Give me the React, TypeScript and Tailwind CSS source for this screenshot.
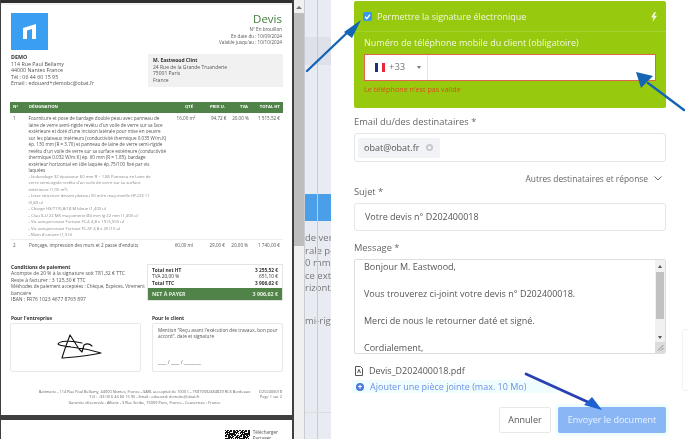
import React from "react";

const qr: React.ReactElement[] = [];
for (let y = 0; y < 14; y++) {
  for (let x = 0; x < 25; x++) {
    if (((x * 7 + y * 13 + ((x * y) % 5)) % 3) !== 1) {
      qr.push(<rect key={x + "-" + y} x={x} y={y} width="1" height="1" fill="#111" />);
    }
  }
}

const desc = [
  "Fourniture et pose de bardage double peau avec panneau de",
  "laine de verre semi-rigide revêtu d'un voile de verre sur sa face",
  "extérieure et doté d'une incision latérale pour mise en oeuvre",
  "sur les plateaux intérieurs (conductivité thermique 0.035 W/m.K)",
  "ép. 130 mm (R = 3.70) et panneau de laine de verre semi-rigide",
  "revêtu d'un voile de verre sur sa surface extérieure (conductivité",
  "thermique 0.032 W/m.K) ép. 60 mm (R = 1.85), bardage",
  "extérieur horizontal en tôle laquée ép.75/100 fixé par vis",
  "laquées",
];
const desc2 = [
  "- Isobardage 32 épaisseur 60 mm R = 1.85 Panneau en laine de",
  "verre semi-rigide revêtu d'un voile de verre sur sa surface",
  "extérieure (1,05 m²).",
  "- Lisse structure devant plateau 50 m/m maçonnelle HF-CI3 11",
  "(0,83 u)",
  "- Charge HS/77/6,8/18 M bleue (1,403 u)",
  "- Clou X-U 22 MX maçonnerie Ø4 mm lg 22 mm (1,403 u)",
  "- Vis autoperceuse Fortuse FC-6 4,8 x 19 (5,555 u)",
  "- Vis autoperceuse Fortuse FC-5F 4,8 x 20 (10 u)",
  "- Main d'oeuvre (1,3 h)",
];

function Label({ children }: { children: React.ReactNode }) {
  return <div className="text-[9.3px] leading-[14px] text-[#666]">{children}</div>;
}

function Page() {
  return (
    <div className="w-[291px] h-[410px] bg-white shrink-0 px-[9px] pt-[4px] text-[4.6px] leading-[6.5px] text-[#555] flex flex-col">
      <div className="flex justify-between items-start">
        <div className="w-[37px] h-[37px] mt-[4px] ml-px bg-[#3a9ff0] flex items-center justify-center">
          <svg width="13" height="15" viewBox="0 0 13 15">
            <path d="M0 4 L13 0 V15 H9 V5 L4 6.5 V15 H0 Z" fill="#fff" />
          </svg>
        </div>
        <div className="text-right pr-[1px]">
          <div className="text-[11.5px] leading-[15px] mt-[2px] text-[#3f7d3a]">Devis</div>
          <div>N° En brouillon</div>
          <div>En date du : 10/09/2024</div>
          <div>Valable jusqu'au : 10/10/2024</div>
        </div>
      </div>
      <div className="flex justify-between mt-[4px]">
        <div className="ml-px text-[5.3px]">
          <div className="font-bold text-[#333]">DEMO</div>
          <div>114 Rue Paul Bellamy</div>
          <div>44000 Nantes France</div>
          <div>Tél : 06 44 60 15 95</div>
          <div>Email : edouard+demobc@obat.fr</div>
        </div>
        <div className="w-[135px] h-[33px] bg-[#f1f1f1] px-[5px] pt-[3px] text-[5px]">
          <div className="font-bold text-[#333]">M. Eastwood Clint</div>
          <div>24 Rue de la Grande Truanderie</div>
          <div>75001 Paris</div>
          <div>France</div>
        </div>
      </div>
      <div className="mt-[15px] h-[11px] bg-[#4f8347] text-white font-bold text-[4.2px] flex items-center px-[3px]">
        <div className="w-[16px]">N°</div>
        <div className="flex-1">DÉSIGNATION</div>
        <div className="w-[30px] text-right">QTÉ</div>
        <div className="w-[32px] text-right">PRIX U.</div>
        <div className="w-[23px] text-right">TVA</div>
        <div className="w-[32px] text-right">TOTAL HT</div>
      </div>
      <div className="flex px-[3px] pt-[2px] border-b border-[#eee] h-[127px] overflow-hidden">
        <div className="w-[16px]">1</div>
        <div className="flex-1 whitespace-nowrap">
          {desc.map((l) => <div key={l}>{l}</div>)}
          <div className="text-[#888] text-[4.2px]">
            {desc2.map((l) => <div key={l}>{l}</div>)}
          </div>
        </div>
        <div className="w-[30px] text-right">16,00 m²</div>
        <div className="w-[32px] text-right">94,72 €</div>
        <div className="w-[23px] text-right">20,00 %</div>
        <div className="w-[32px] text-right">1 515,52 €</div>
      </div>
      <div className="flex px-[3px] pt-[2px]">
        <div className="w-[16px]">2</div>
        <div className="flex-1">Ponçage, impression des murs et 2 passe d'enduits</div>
        <div className="w-[30px] text-right">60,00 ml</div>
        <div className="w-[32px] text-right">29,00 €</div>
        <div className="w-[23px] text-right">20,00 %</div>
        <div className="w-[32px] text-right">1 740,00 €</div>
      </div>
      <div className="flex justify-between mt-[15px]">
        <div className="w-[130px] ml-px text-[5px]">
          <div className="font-bold text-[#333]">Conditions de paiement</div>
          <div>Acompte de 20 % à la signature soit 781,32 € TTC</div>
          <div>Reste à facturer : 3 125,30 € TTC</div>
          <div className="text-[4.6px] whitespace-nowrap">Méthodes de paiement acceptées : Chèque, Espèces, Virement</div>
          <div>bancaire</div>
          <div>IBAN : FR76 1023 4677 8765 897</div>
        </div>
        <div className="w-[136px] h-[37px] mt-[0.5px] border border-[#e4e4e4] flex flex-col text-[4.8px]">
          <div className="flex-1 px-[4px] pt-[2px] text-[#333] leading-[6.3px]">
            <div className="flex justify-between font-bold"><span>Total net HT</span><span>3 255,52 €</span></div>
            <div className="flex justify-between"><span>TVA 20,00 %</span><span>651,10 €</span></div>
            <div className="flex justify-between font-bold"><span>Total TTC</span><span>3 906,62 €</span></div>
          </div>
          <div className="h-[12px] bg-[#4f8347] text-[#e6f2e2] font-bold text-[5.3px] flex items-center justify-between px-[4px]">
            <span>NET À PAYER</span><span>3 906,62 €</span>
          </div>
        </div>
      </div>
      <div className="flex justify-between mt-[12px] text-[4.9px]">
        <div className="w-[131px]">
          <div className="font-bold text-[#333] h-[7px] ml-px">Pour l'entreprise</div>
          <div className="mt-[1px] h-[49px] rounded-[2px] border border-[#e8e8e8] flex items-center justify-center pl-[9px]">
            <svg width="50" height="28" viewBox="56 334 50 28" fill="none" stroke="#111" strokeWidth="1.1" strokeLinejoin="round" strokeLinecap="round">
              <path d="M71 336 C68 344 65 352 63 359 C75 358 90 357 102 354 C92 351 82 349 72 348 C66 347 60 347 59 345 C60 342 72 341 83 344 M71 336 L80 350 L83 353 L85 346 C88 344 91 345 93 347" />
            </svg>
          </div>
        </div>
        <div className="w-[131px]">
          <div className="font-bold text-[#333] h-[7px]">Pour le client</div>
          <div className="mt-[1px] h-[49px] rounded-[2px] border border-[#e8e8e8] px-[5px] pt-[3px] flex flex-col justify-between pb-[5px]">
            <div className="text-[4.7px] whitespace-nowrap">
              <div>Mention "Reçu avant l'exécution des travaux, bon pour</div>
              <div>accord", date et signature</div>
            </div>
            <div>____ / ____ / ________</div>
          </div>
        </div>
      </div>
      <div className="flex mt-[17px] text-[3.9px] leading-[5.5px] text-[#666]">
        <div className="flex-1 text-center pl-[26px]">
          <div>Batimarie - 114 Rue Paul Bellamy, 44000 Nantes, France - SARL au capital de 1000 € - 75879392484829 RCS Bordeaux</div>
          <div>Tél : +33 (0) 6 44 60 15 95 - Email : edouard+demobc@obat.fr</div>
          <div>Garantie décennale : Allianz - 3 Rue Scribe, 75009 Paris, France - Couverture : France</div>
        </div>
        <div className="w-[30px] text-right pr-px">
          <div>D202400018</div>
          <div>Page 1 sur 2</div>
        </div>
      </div>
    </div>
  );
}

function Viewer() {
  return (
    <div className="w-[294px] h-full shrink-0 bg-[#3f3f3f] pl-px overflow-hidden flex flex-col blur-[0.35px]">
      <div className="w-[291px] h-[5px] shrink-0 flex flex-col">
        <div className="h-[3px] bg-[#2f2f2f]" />
        <div className="h-[2px] bg-[#f2f2f2]" />
      </div>
      <Page />
      <div className="h-[5px] shrink-0" />
      <div className="w-[291px] flex-1 bg-white flex justify-end pr-[14px] pt-[10px] gap-[3px] text-[4.6px] leading-[5.5px] text-[#555]">
        <svg width="25" height="14" viewBox="0 0 25 14">{qr}</svg>
        <div>
          <div>Télécharger</div>
          <div>Partager</div>
        </div>
      </div>
    </div>
  );
}

function Scrollbar() {
  return (
    <div className="w-[10px] h-full shrink-0 bg-[#f0f0f0] flex flex-col">
      <div className="h-[13px] pt-[3px] bg-[#f1f1f1] flex justify-center">
        <div className="mt-[3px] w-0 h-0 border-x-[3px] border-x-transparent border-b-[3px] border-b-[#777]" />
      </div>
      <div className="h-[233px] bg-[#bdbdbd]" />
    </div>
  );
}

function Strip() {
  const lines = ["de verre", "rale pour", "0 mm (R", "ce extérie", "rizontal e"];
  return (
    <div className="w-[27px] h-full shrink-0 bg-[#e9ebf2] border-l border-[#c9cbd2] flex flex-col overflow-hidden text-[9.5px] text-[#777] whitespace-nowrap relative">
      <div className="absolute left-[12px] top-0 bottom-0 w-px bg-[#c9cbd2]" />
      <div className="h-[37px] shrink-0" />
      <div className="h-[28px] shrink-0 bg-[#dfe1ea]" />
      <div className="h-[129px] shrink-0" />
      <div className="h-[27px] shrink-0 bg-[#4a9fe8]" />
      <div className="pt-[11px] leading-[12.5px]">
        {lines.map((l) => <div key={l}>{l}</div>)}
        <div className="mt-[20px]">mi-rigide</div>
      </div>
      <div className="absolute left-0 right-0 top-[412px] h-px bg-[#dcdde3]" />
    </div>
  );
}

function Form() {
  return (
    <div className="flex-1 h-full bg-white pl-[23px] relative overflow-hidden">
      <div className="w-[312px] flex flex-col">
        <div className="mt-px h-[107px] bg-[#97c90f] rounded-[2px] flex flex-col">
          <div className="h-[31px] shrink-0 border-b border-[#a3d12e] flex items-center justify-between pl-[9px] pr-[9px] pt-px">
            <div className="flex items-center gap-[5px]">
              <div className="w-[9px] h-[9px] rounded-[2px] bg-[#3a97e8] flex items-center justify-center">
                <svg width="7" height="7" viewBox="0 0 10 10" fill="none" stroke="#fff" strokeWidth="2">
                  <path d="M1.5 5.5 L4 8 L8.5 2.5" />
                </svg>
              </div>
              <span className="text-[9px] leading-[14px] text-[#f2f8dc]">Permettre la signature électronique</span>
            </div>
            <svg width="6" height="10" viewBox="0 0 6 10"><path d="M3.5 0 L0 5.5 H2.5 L1.5 10 L6 3.8 H3.3 L5 0 Z" fill="#f2f8dc" /></svg>
          </div>
          <div className="px-[10px] pt-[4px]">
            <div className="text-[9px] leading-[14px] text-[#f2f8dc]">Numéro de téléphone mobile du client (obligatoire)</div>
            <div className="mt-[4px] h-[27px] bg-white border border-[#e0654a] flex items-center">
              <div className="w-[63px] h-full border-r border-[#e3e3e3] flex items-center pl-[10px] gap-[4px]">
                <div className="w-[10px] h-[9px] flex">
                  <div className="flex-1 bg-[#1d2f7d]" />
                  <div className="flex-1 bg-white" />
                  <div className="flex-1 bg-[#e8283a]" />
                </div>
                <span className="text-[9.5px] text-[#777]">+33</span>
                <div className="ml-[8px] w-0 h-0 border-x-[2.5px] border-x-transparent border-t-[3px] border-t-[#777]" />
              </div>
            </div>
            <div className="mt-[3px] text-[7.2px] leading-[11px] text-[#d9531e]">Le téléphone n'est pas valide</div>
          </div>
        </div>

        <div className="mt-[7px]"><Label>Email du/des destinataires *</Label></div>
        <div className="mt-[4px] h-[29px] rounded-[3px] border border-[#e4e6ea] flex items-center pl-[3px]">
          <div className="h-[20px] w-[82px] rounded-[2px] bg-[#f1f3f6] flex items-center pl-[6px] gap-[7px] text-[9px] text-[#555]">
            obat@obat.fr
            <div className="w-[7px] h-[7px] rounded-full bg-[#c5c8cd] flex items-center justify-center">
              <div className="w-[3px] h-[3px] rounded-full bg-white" />
            </div>
          </div>
        </div>
        <div className="mt-[10px] pr-[4px] flex items-center justify-end gap-[6px] text-[8.4px] leading-[13px] text-[#666]">
          Autres destinataires et réponse
          <svg width="8" height="5" viewBox="0 0 8 5" fill="none" stroke="#666" strokeWidth="1"><path d="M0.5 0.5 L4 4 L7.5 0.5" /></svg>
        </div>
        <div><Label>Sujet *</Label></div>
        <div className="mt-[4px] h-[28px] rounded-[3px] border border-[#e4e6ea] flex items-center pl-[10px] text-[9px] text-[#555]">Votre devis n° D202400018</div>
        <div className="mt-[10px]"><Label>Message *</Label></div>
        <div className="mt-[4px] h-[95px] rounded-[2px] border border-[#dcdee2] flex overflow-hidden">
          <div className="flex-1 pl-[9px] text-[9px] leading-[13.5px] text-[#555] overflow-hidden">
            <div>Bonjour M. Eastwood,</div>
            <div className="h-[13.5px]" />
            <div>Vous trouverez ci-joint votre devis n° D202400018.</div>
            <div className="h-[13.5px]" />
            <div>Merci de nous le retourner daté et signé.</div>
            <div className="h-[13.5px]" />
            <div>Cordialement,</div>
          </div>
          <div className="w-[10px] bg-[#f1f1f1] flex flex-col">
            <div className="h-[12px] flex justify-center items-center">
              <div className="w-0 h-0 border-x-[2.5px] border-x-transparent border-b-[3px] border-b-[#555]" />
            </div>
            <div className="h-[47px] bg-[#c1c1c1] mx-px" />
            <div className="flex-1 flex justify-center items-end pb-[3px]">
              <div className="w-0 h-0 border-x-[2.5px] border-x-transparent border-t-[3px] border-t-[#555]" />
            </div>
            <div className="h-[11px] bg-[#dcdcdc] flex items-center justify-center">
              <svg width="7" height="7" viewBox="0 0 7 7" stroke="#777" strokeWidth="0.8"><path d="M1 6.5 L6.5 1 M4 6.5 L6.5 4" /></svg>
            </div>
          </div>
        </div>
        <div className="mt-[10px] flex items-center gap-[6px] text-[9px] leading-[13px] text-[#555] pl-px">
          <svg width="8" height="10" viewBox="0 0 8 10" fill="none" stroke="#555" strokeWidth="1"><path d="M0.5 0.5 H5.5 L7.5 2.5 V9.5 H0.5 Z M2.5 7 L4 3.5 L5.5 7" /></svg>
          Devis_D202400018.pdf
        </div>
        <div className="mt-[3px] w-[205px] flex items-center gap-[6px] text-[9px] leading-[13px] text-[#6d8fe6] bg-[#f0fdff] pl-[4px] -ml-[2px]">
          <div className="w-[8px] h-[8px] rounded-full bg-[#4a78d8] flex items-center justify-center text-white text-[8px] leading-[8px] font-bold">+</div>
          Ajouter une pièce jointe (max. 10 Mo)
        </div>
        <div className="mt-[14px] flex justify-end gap-[7px]">
          <div className="w-[52px] h-[26px] rounded-[2px] border border-[#e8e8e8] flex items-center justify-center text-[9px] text-[#555]">Annuler</div>
          <div className="w-[108px] h-[26px] rounded-[2px] bg-[#8ab6f5] shadow-[0_0_0_3px_#f0fdff] flex items-center justify-center text-[9px] text-[#eaf2ff]">Envoyer le document</div>
        </div>
      </div>
      <div className="absolute left-[351px] top-[329px] w-[10px] h-[62px] rounded-l-[3px] border border-[#f2f2f2]" />
    </div>
  );
}

export default function App() {
  return (
    <div className="w-[688px] h-[439px] relative flex overflow-hidden bg-white blur-[0.3px]" style={{ fontFamily: '"Open Sans", sans-serif' }}>
      <Viewer />
      <Scrollbar />
      <Strip />
      <Form />
      <svg className="absolute left-0 top-0 pointer-events-none" width="688" height="439" viewBox="0 0 688 439">
        <g stroke="#1565b5" fill="#1565b5" strokeLinecap="round">
          <path d="M307 71 L350 30" strokeWidth="2.4" fill="none" />
          <path d="M361 20 L344 32 L352 38 Z" stroke="none" />
          <path d="M684 110 L648 83" strokeWidth="2.4" fill="none" />
          <path d="M636 72 L641 88 L653 76 Z" stroke="none" />
        </g>
        <path d="M526 374 L590 403" stroke="#2a3fb0" strokeWidth="2.8" strokeLinecap="round" />
        <path d="M602 410 L592 397 L584 405 Z" fill="#1f5fd0" />
      </svg>
    </div>
  );
}
